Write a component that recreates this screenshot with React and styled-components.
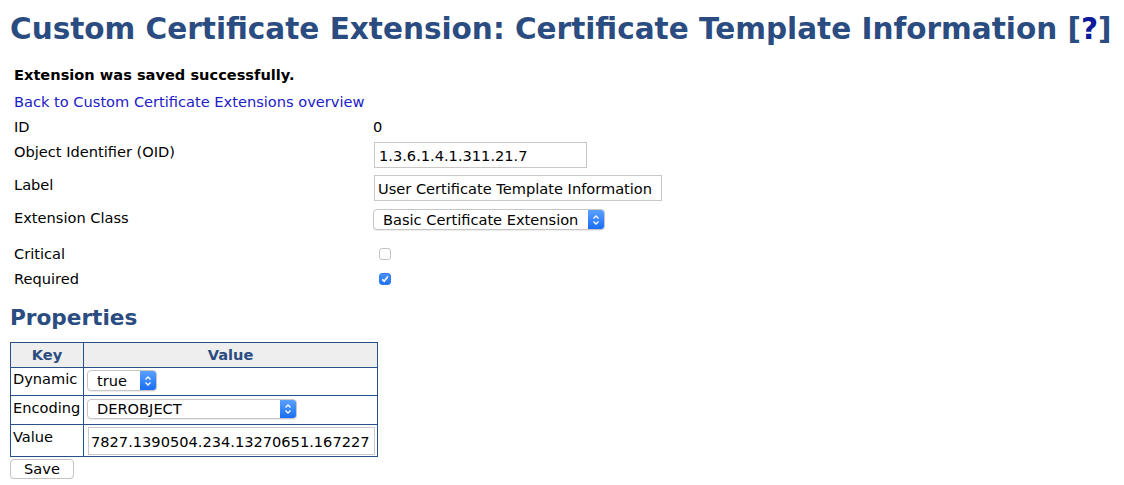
import React from "react";
import styled, { createGlobalStyle } from "styled-components";

const GlobalStyle = createGlobalStyle`
  body {
    margin: 0;
    background: #fff;
    font-family: "DejaVu Sans", Verdana, sans-serif;
    font-size: 14.6px;
    color: #000;
  }
`;

const Page = styled.div`
  padding: 12px 10px 0 10px;
`;

const Title = styled.h1`
  margin: 0;
  font-size: 29.5px;
  line-height: 34px;
  font-weight: bold;
  color: #2a4c80;
  white-space: nowrap;

  a {
    color: #0d1a9a;
    text-decoration: none;
  }
`;

const Message = styled.p`
  margin: 20px 0 0 4px;
  font-weight: bold;
  line-height: 18px;
`;

const BackLink = styled.a`
  display: block;
  margin: 9px 0 0 4px;
  line-height: 18px;
  color: #2020c8;
  text-decoration: none;
`;

const FieldGrid = styled.div`
  margin: 7px 0 0 4px;
  display: grid;
  grid-template-columns: 359px auto;
`;

const FieldRow = styled.div`
  display: contents;

  & > * {
    height: ${(p) => p.$h}px;
    line-height: 18px;
  }
`;

const FieldLabel = styled.div`
  box-sizing: border-box;
  padding-top: ${(p) => p.$pad || 0}px;
`;

const FieldValue = styled.div`
  display: flex;
  align-items: flex-start;
`;

const TextInput = styled.input`
  box-sizing: border-box;
  width: ${(p) => p.$w}px;
  height: ${(p) => p.$hgt || 26}px;
  margin: 0 0 0 1px;
  padding: 0 ${(p) => p.$padX ?? 4}px;
  border: 1px solid #c8c8c8;
  font-family: inherit;
  font-size: 14.6px;
  color: #000;
  background: #fff;
  outline: none;
`;

const SelectBox = styled.div`
  box-sizing: border-box;
  width: ${(p) => p.$w}px;
  height: ${(p) => p.$hgt}px;
  display: flex;
  align-items: stretch;
  border: 1px solid #c6c6c6;
  border-radius: 4px;
  background: #fff;
  overflow: hidden;
  box-shadow: 0 1px 1px rgba(0, 0, 0, 0.08);
`;

const SelectText = styled.span`
  flex: 1;
  padding-left: 9px;
  display: flex;
  align-items: center;
  white-space: nowrap;
`;

const Stepper = styled.span`
  width: 16px;
  display: flex;
  align-items: center;
  justify-content: center;
  background: linear-gradient(#5aa0ff, #1a6ef5);
`;

const Check = styled.span`
  box-sizing: border-box;
  width: 12px;
  height: 12px;
  margin: 3px 0 0 6px;
  border-radius: 3px;
  display: flex;
  align-items: center;
  justify-content: center;
  border: 1px solid ${(p) => (p.$on ? "#2f7cf0" : "#c4c4c4")};
  background: ${(p) => (p.$on ? "linear-gradient(#4a90ff, #2273ee)" : "#fff")};
`;

const SectionTitle = styled.h2`
  margin: 10px 0 0 0;
  font-size: 21.6px;
  line-height: 26px;
  font-weight: bold;
  color: #2a4c80;
`;

const PropTable = styled.table`
  margin-top: 11px;
  border-collapse: collapse;
  width: 368px;
  border: 1px solid #2a5088;
`;

const PropRow = styled.tr`
  height: ${(p) => p.$h}px;
`;

const HeadCell = styled.th`
  padding: 0;
  border: 1px solid #2a5088;
  background: #eeeeee;
  color: #2a4c80;
  font-weight: bold;
  text-align: center;
  line-height: 18px;
  width: ${(p) => p.$w || "auto"};
`;

const KeyCell = styled.td`
  border: 1px solid #2a5088;
  vertical-align: top;
  padding: ${(p) => p.$top}px 2px 0 2px;
  line-height: 18px;
`;

const ValueCell = styled.td`
  border: 1px solid #2a5088;
  vertical-align: top;
  padding: ${(p) => p.$top}px 0 0 3px;
  line-height: 18px;
`;

const SaveButton = styled.button`
  display: block;
  margin-top: 2px;
  width: 64px;
  height: 20px;
  padding: 0;
  border: 1px solid #c4c4c4;
  border-radius: 4px;
  background: #fff;
  font-family: inherit;
  font-size: 14.6px;
  line-height: 18px;
  color: #000;
  box-shadow: 0 1px 1px rgba(0, 0, 0, 0.08);
`;

const StepIcon = () => (
  <svg width="8" height="12" viewBox="0 0 8 12">
    <path
      d="M1.5 4.5 L4 2 L6.5 4.5 M1.5 7.5 L4 10 L6.5 7.5"
      fill="none"
      stroke="#fff"
      strokeWidth="1.3"
    />
  </svg>
);

const Select = ({ w, h = 21, children }) => (
  <SelectBox $w={w} $hgt={h}>
    <SelectText>{children}</SelectText>
    <Stepper>
      <StepIcon />
    </Stepper>
  </SelectBox>
);

const CheckBox = ({ on }) => (
  <Check $on={on}>
    {on && (
      <svg width="8" height="8" viewBox="0 0 8 8">
        <path d="M1.2 4.3 L3.2 6.2 L6.8 1.6" fill="none" stroke="#fff" strokeWidth="1.6" />
      </svg>
    )}
  </Check>
);

export default function App() {
  return (
    <Page>
      <GlobalStyle />
      <Title>
        Custom Certificate Extension: Certificate Template Information [<a href="#">?</a>]
      </Title>
      <Message>Extension was saved successfully.</Message>
      <BackLink href="#">Back to Custom Certificate Extensions overview</BackLink>

      <FieldGrid>
        <FieldRow $h={24}>
          <FieldLabel>ID</FieldLabel>
          <FieldValue>0</FieldValue>
        </FieldRow>
        <FieldRow $h={33}>
          <FieldLabel $pad={1}>Object Identifier (OID)</FieldLabel>
          <FieldValue>
            <TextInput $w={213} defaultValue="1.3.6.1.4.1.311.21.7" />
          </FieldValue>
        </FieldRow>
        <FieldRow $h={34}>
          <FieldLabel $pad={1}>Label</FieldLabel>
          <FieldValue>
            <TextInput $w={288} $padX={3} defaultValue="User Certificate Template Information" />
          </FieldValue>
        </FieldRow>
        <FieldRow $h={36}>
          <FieldLabel>Extension Class</FieldLabel>
          <FieldValue>
            <Select w={232}>Basic Certificate Extension</Select>
          </FieldValue>
        </FieldRow>
        <FieldRow $h={25}>
          <FieldLabel>Critical</FieldLabel>
          <FieldValue>
            <CheckBox />
          </FieldValue>
        </FieldRow>
        <FieldRow $h={25}>
          <FieldLabel>Required</FieldLabel>
          <FieldValue>
            <CheckBox on />
          </FieldValue>
        </FieldRow>
      </FieldGrid>

      <SectionTitle>Properties</SectionTitle>
      <PropTable>
        <thead>
          <PropRow $h={25}>
            <HeadCell $w="72px">Key</HeadCell>
            <HeadCell>Value</HeadCell>
          </PropRow>
        </thead>
        <tbody>
          <PropRow $h={28}>
            <KeyCell $top={2}>Dynamic</KeyCell>
            <ValueCell $top={2}>
              <Select w={70}>true</Select>
            </ValueCell>
          </PropRow>
          <PropRow $h={29}>
            <KeyCell $top={3}>Encoding</KeyCell>
            <ValueCell $top={3}>
              <Select w={210} h={20}>DEROBJECT</Select>
            </ValueCell>
          </PropRow>
          <PropRow $h={32}>
            <KeyCell $top={3}>Value</KeyCell>
            <ValueCell $top={2}>
              <TextInput $w={287} $hgt={28} $padX={2} defaultValue="7827.1390504.234.13270651.167227" />
            </ValueCell>
          </PropRow>
        </tbody>
      </PropTable>
      <SaveButton>Save</SaveButton>
    </Page>
  );
}
